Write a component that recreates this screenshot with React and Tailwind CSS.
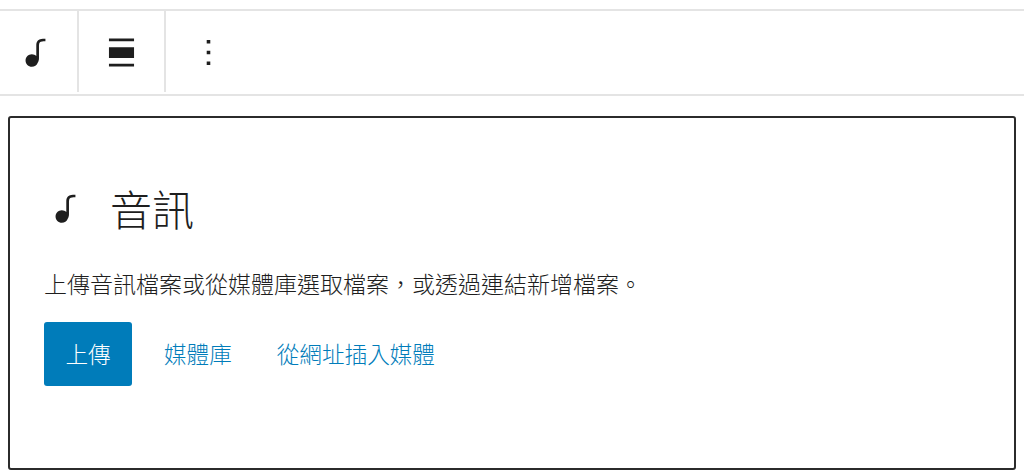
const NoteIcon = ({ className }) => (
  <svg className={className} viewBox="0 0 24 24" fill="currentColor">
    <path d="M17.7 4.3c-1.2 0-2.8 0-3.8 1-.6.6-.9 1.500-.9 2.600V14c-.6-.6-1.500-1-2.500-1C8.600 13 7 14.600 7 16.500S8.600 20 10.500 20c1.500 0 2.800-1 3.300-2.300.5-.8.7-1.600.7-2.500V7.900c0-.7.2-1.200.5-1.600.6-.6 1.800-.6 2.800-.6h.3V4.300h-.4z" />
  </svg>
);

const AlignIcon = ({ className }) => (
  <svg className={className} viewBox="0 0 24 24" fill="currentColor">
    <path d="M5 15h14V9H5v6zm0 4.800h14v-1.500H5v1.500zM5 4.200v1.500h14V4.200H5z" />
  </svg>
);

const MoreIcon = ({ className }) => (
  <svg className={className} viewBox="0 0 24 24" fill="currentColor">
    <path d="M13 19h-2v-2h2v2zm0-6h-2v-2h2v2zm0-6h-2V5h2v2z" />
  </svg>
);

export default function App() {
  return (
    <div lang="zh-TW" className="w-[1024px] h-[476px] bg-white overflow-hidden pt-[9px] font-['Noto_Sans_CJK_TC','Liberation_Sans',sans-serif] font-light text-[#1e1e1e]">
      <div className="h-[87px] border-y-2 border-[#e4e4e4] flex items-stretch">
        <div className="w-[79px] flex items-center pl-[13px] pt-[2px] border-r-2 border-[#e4e4e4] mb-[2px]">
          <NoteIcon className="w-[43px] h-[43px]" />
        </div>
        <div className="w-[87px] flex items-center pl-[21px] pt-[2px] border-r-2 border-[#e4e4e4] mb-[2px]">
          <AlignIcon className="w-[43px] h-[43px]" />
        </div>
        <div className="flex items-center pl-[21px] pt-[1px] mb-[2px]">
          <MoreIcon className="w-[43px] h-[43px]" />
        </div>
      </div>
      <div className="mt-[20px] mx-2 h-[354px] border-2 border-[#2b2b2b] rounded-[3px] px-[34px] pt-[60px]">
        <div className="flex items-center h-[60px]">
          <NoteIcon className="w-[43px] h-[43px] -ml-[1px]" />
          <h2 className="ml-[24px] text-[42px] leading-[60px] font-light">音訊</h2>
        </div>
        <p className="mt-[30px] text-[23px] leading-[30px]">上傳音訊檔案或從媒體庫選取檔案，或透過連結新增檔案。</p>
        <div className="mt-[24px] flex items-center">
          <button className="w-[88px] h-[64px] bg-[#007cba] rounded-[3px] text-white text-[22.6px] font-light">上傳</button>
          <a className="ml-[32px] text-[22.6px] text-[#007cba]">媒體庫</a>
          <a className="ml-[45px] text-[22.6px] text-[#007cba]">從網址插入媒體</a>
        </div>
      </div>
    </div>
  );
}
